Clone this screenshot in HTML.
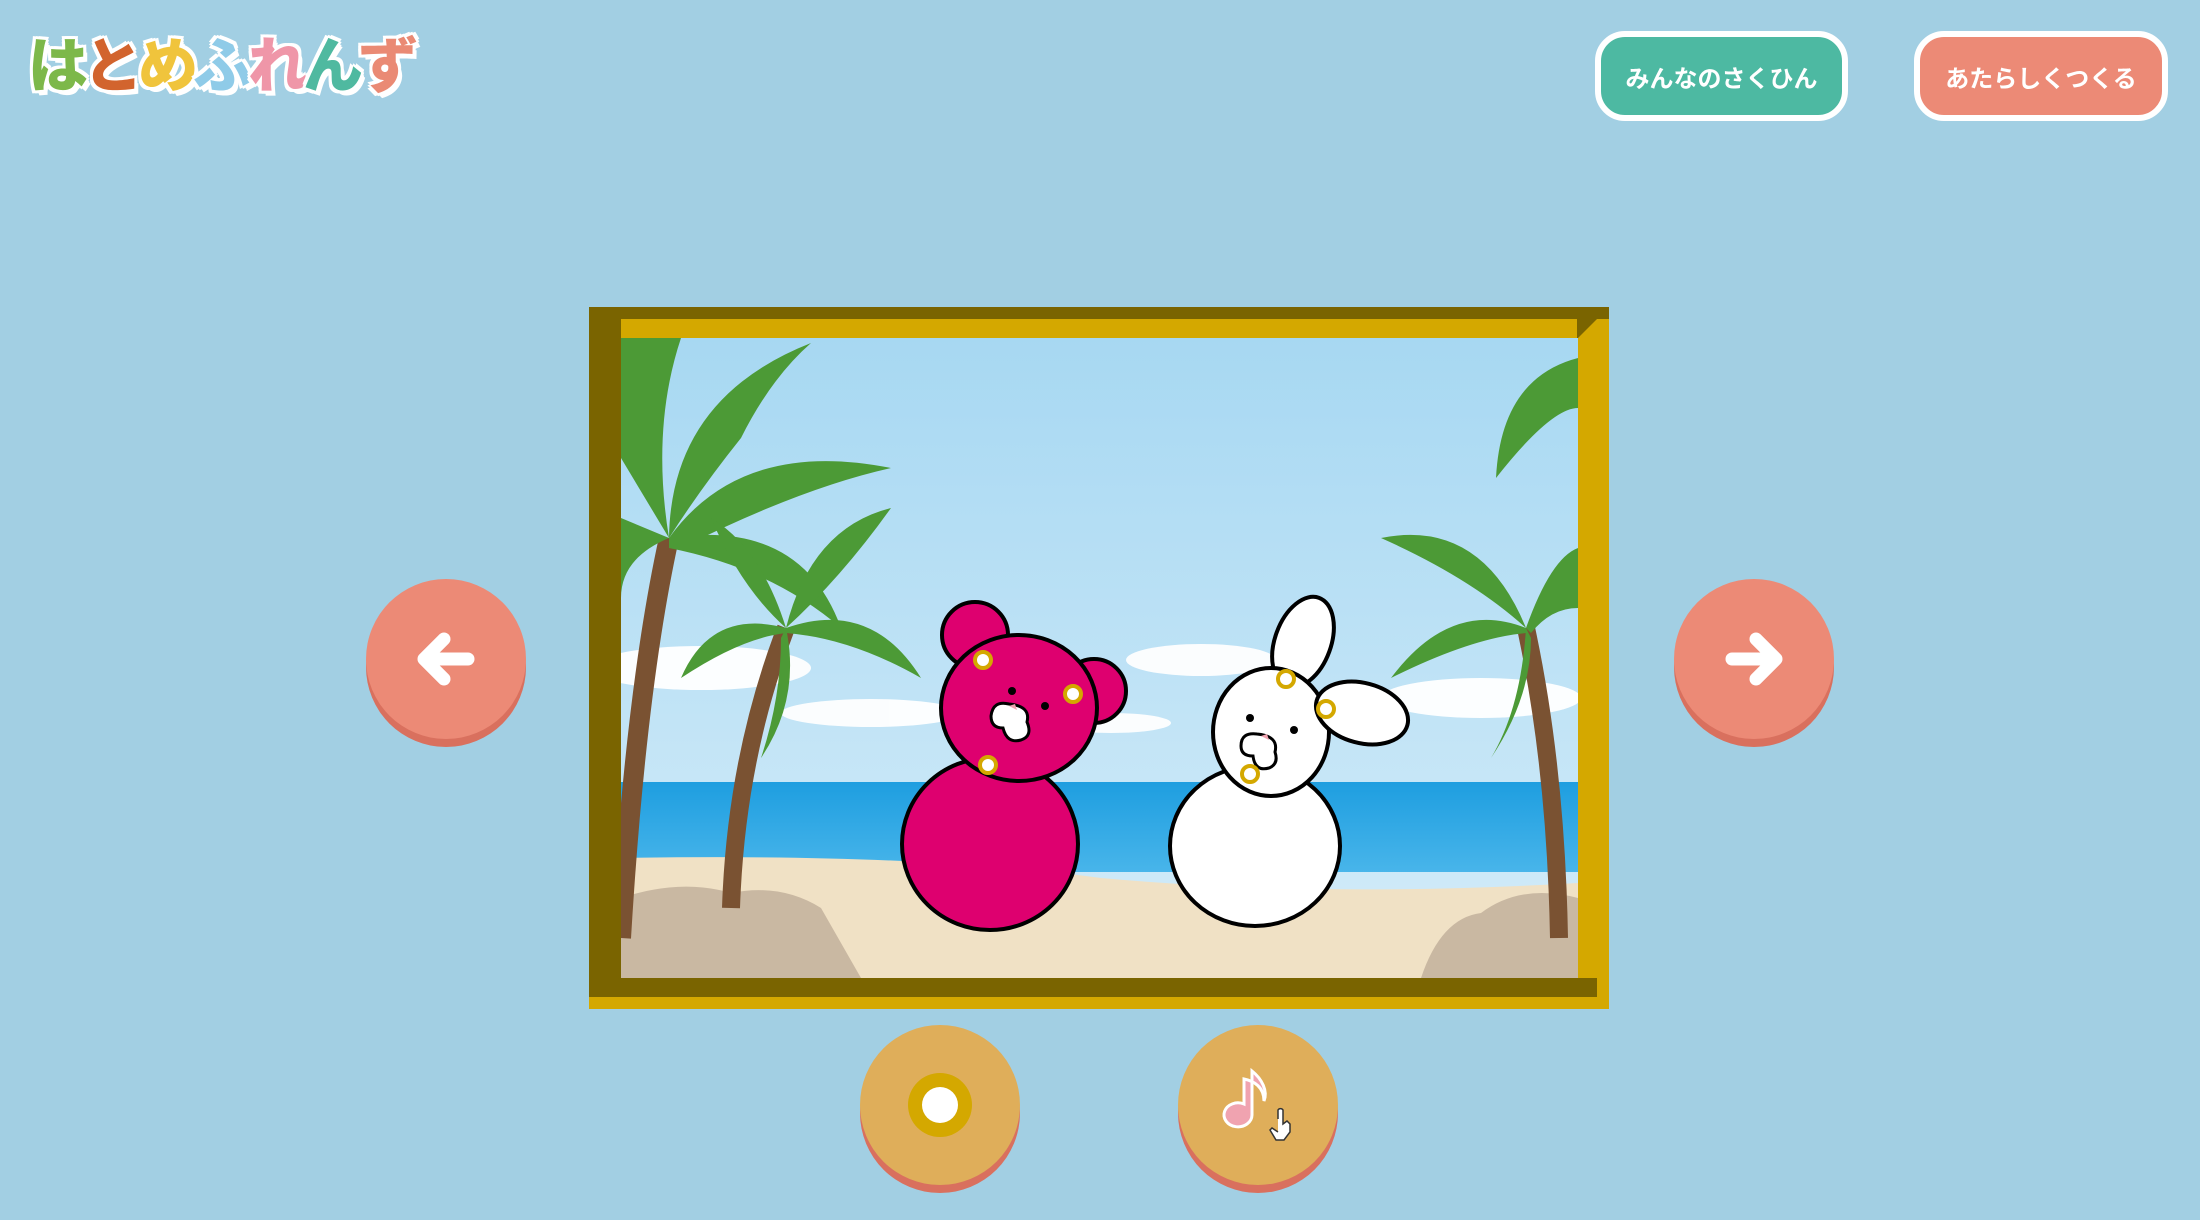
<!DOCTYPE html>
<html><head><meta charset="utf-8"><style>
html,body{margin:0;padding:0}
body{width:2200px;height:1220px;background:#a2cfe3;position:relative;overflow:hidden;font-family:"Liberation Sans","Noto Sans CJK JP",sans-serif}
.logo{position:absolute;left:28px;top:32px;font-size:60px;font-weight:900;letter-spacing:-5px;line-height:1;font-family:"Noto Sans CJK JP",sans-serif}
.logo span{text-shadow:3px 0 #fff,-3px 0 #fff,0 3px #fff,0 -3px #fff,3px 3px #fff,-3px 3px #fff,3px -3px #fff,-3px -3px #fff,4px 5px #fff}
.tb{position:absolute;top:31px;height:90px;box-sizing:border-box;border:6px solid #fff;border-radius:30px;color:#fff;font-size:24px;font-weight:bold;display:flex;align-items:center;justify-content:center;font-family:"Noto Sans CJK JP",sans-serif}
.circ{position:absolute;width:160px;height:160px;border-radius:50%}
</style></head><body>
<div class="logo"><span style="color:#7db84a">は</span><span style="color:#d2642e">と</span><span style="color:#f0c43c">め</span><span style="color:#8fcbe8">ふ</span><span style="color:#ef96a8">れ</span><span style="color:#4fb9a0">ん</span><span style="color:#ea8a74">ず</span></div>
<div class="tb" style="left:1595px;width:253px;background:#4db9a2">みんなのさくひん</div>
<div class="tb" style="left:1914px;width:254px;background:#ec8a76">あたらしくつくる</div>

<div class="circ" style="left:366px;top:587px;background:#d9705e"></div>
<div class="circ" style="left:366px;top:579px;background:#ec8a76"></div>
<svg style="position:absolute;left:406px;top:619px" width="80" height="80" viewBox="0 0 80 80"><path d="M62 40H20M38 20L18 40l20 20" stroke="#fff" stroke-width="13" fill="none" stroke-linecap="round" stroke-linejoin="round"/></svg>
<div class="circ" style="left:1674px;top:587px;background:#d9705e"></div>
<div class="circ" style="left:1674px;top:579px;background:#ec8a76"></div>
<svg style="position:absolute;left:1714px;top:619px" width="80" height="80" viewBox="0 0 80 80"><path d="M18 40h42M42 20l20 20-20 20" stroke="#fff" stroke-width="13" fill="none" stroke-linecap="round" stroke-linejoin="round"/></svg>

<div class="circ" style="left:860px;top:1033px;background:#d9705e"></div>
<div class="circ" style="left:860px;top:1025px;background:#dfae5a"></div>
<div style="position:absolute;left:908px;top:1073px;width:64px;height:64px;border-radius:50%;background:#d4a800"></div>
<div style="position:absolute;left:922px;top:1087px;width:36px;height:36px;border-radius:50%;background:#fff"></div>
<div class="circ" style="left:1178px;top:1033px;background:#d9705e"></div>
<div class="circ" style="left:1178px;top:1025px;background:#dfae5a"></div>
<svg style="position:absolute;left:1218px;top:1065px" width="80" height="80" viewBox="0 0 80 80"><path d="M34 6v44a14 12 0 1 1-8-11V14c10 2 20 8 20 22 4-10-2-22-12-30z" fill="#f0a3b0" stroke="#fff" stroke-width="3"/><path d="M60 54v-9a3 3 0 0 1 5 0v14l4-3 3 3v8l-6 8h-8l-6-10 2-2 6 4" fill="#fff" stroke="#333" stroke-width="1.5"/></svg>

<svg style="position:absolute;left:589px;top:307px" width="1020" height="702" viewBox="0 0 1020 702">
<rect width="1020" height="702" fill="#d4a800"/>
<rect x="0" y="0" width="1020" height="12" fill="#7a6400"/>
<rect x="0" y="0" width="32" height="690" fill="#7a6400"/>
<rect x="12" y="671" width="996" height="19" fill="#7a6400"/>
<polygon points="988,12 1008,12 988,32" fill="#7a6400"/>
<polygon points="0,690 12,690 0,702" fill="#d4a800"/>
</svg>
<svg style="position:absolute;left:621px;top:338px" width="957" height="640" viewBox="0 0 957 640">
<defs><linearGradient id="sky" x1="0" y1="0" x2="0" y2="1"><stop offset="0" stop-color="#a7d8f2"/><stop offset="1" stop-color="#d4ecf9"/></linearGradient>
<linearGradient id="sea" x1="0" y1="0" x2="0" y2="1"><stop offset="0" stop-color="#1e9ee0"/><stop offset="1" stop-color="#48b5ea"/></linearGradient></defs>
<rect width="957" height="640" fill="url(#sky)"/>
<g fill="#fff" opacity=".95">
<ellipse cx="80" cy="330" rx="110" ry="22"/><ellipse cx="250" cy="375" rx="90" ry="14"/><ellipse cx="580" cy="322" rx="75" ry="16"/><ellipse cx="860" cy="360" rx="100" ry="20"/><ellipse cx="490" cy="385" rx="60" ry="10"/></g>
<rect y="444" width="957" height="90" fill="url(#sea)"/>
<path d="M0 520 Q300 515 480 540 Q700 560 957 545 V640 H0Z" fill="#f0e1c5"/>
<path d="M0 560 Q60 540 110 555 Q160 545 200 570 L240 640 H0Z" fill="#c9b8a2"/>
<path d="M957 560 Q900 545 860 575 Q820 580 800 640 H957Z" fill="#c9b8a2"/>
<path d="M0 600 Q15 350 48 200" stroke="#7a5232" stroke-width="20" fill="none"/>
<path d="M110 570 Q115 420 165 290" stroke="#7a5232" stroke-width="18" fill="none"/>
<path d="M938 600 Q935 430 905 290" stroke="#7a5232" stroke-width="18" fill="none"/>
<g fill="#4c9a36">
<path d="M48 200 Q50 60 190 5 Q150 40 120 100 Q80 150 48 200Z"/>
<path d="M48 200 Q30 90 60 0 H0 V120Z"/>
<path d="M48 200 Q120 100 270 130 Q180 150 60 210Z"/>
<path d="M48 200 Q180 180 220 290 Q150 230 48 210Z"/>
<path d="M48 200 Q0 220 0 260 V180Z"/>
<path d="M165 290 Q140 210 90 180 Q120 250 165 290Z"/>
<path d="M165 290 Q190 190 270 170 Q220 240 165 290Z"/>
<path d="M165 290 Q250 260 300 340 Q230 300 165 295Z"/>
<path d="M165 290 Q90 270 60 340 Q120 300 165 295Z"/>
<path d="M165 290 Q180 360 140 420 Q160 360 160 300Z"/>
<path d="M905 290 Q860 180 760 200 Q850 240 905 290Z"/>
<path d="M905 290 Q830 260 770 340 Q850 300 905 295Z"/>
<path d="M905 290 Q930 220 957 210 V270 Q930 270 910 295Z"/>
<path d="M957 20 Q880 40 875 140 Q930 70 957 70Z"/>
<path d="M905 290 Q900 370 870 420 Q910 360 910 300Z"/>
</g>
<g stroke="#000" stroke-width="4">
<ellipse cx="369" cy="506" rx="88" ry="86" fill="#de006f"/>
<circle cx="354" cy="297" r="33" fill="#de006f"/>
<circle cx="473" cy="353" r="32" fill="#de006f"/>
<ellipse cx="398" cy="370" rx="78" ry="73" fill="#de006f"/>
<path d="M388 366 q-16 -4 -18 12 q0 12 12 12 q4 16 18 12 q12 -4 6 -18 q4 -16 -18 -18z" fill="#fff" stroke-width="3"/>
</g>
<circle cx="391" cy="353" r="4"/><circle cx="424" cy="368" r="4"/>
<path d="M388 368 l6 -2 l2 6z" fill="#f0a3b0"/>
<g stroke="#000" stroke-width="4" fill="#fff">
<ellipse cx="634" cy="508" rx="85" ry="80"/>
<ellipse cx="682" cy="304" rx="28" ry="47" transform="rotate(20 682 304)"/>
<ellipse cx="650" cy="394" rx="58" ry="64"/>
<ellipse cx="741" cy="375" rx="47" ry="30" transform="rotate(15 741 375)"/>
<path d="M636 396 q-16 -2 -16 12 q0 10 12 10 q2 16 16 12 q10 -4 6 -16 q4 -16 -18 -18z" stroke-width="3"/>
</g>
<circle cx="629" cy="380" r="4"/><circle cx="673" cy="392" r="4"/>
<path d="M640 398 l6 -2 l2 6z" fill="#f0a3b0"/>
<g fill="#fff" stroke="#d4a800" stroke-width="4">
<circle cx="362" cy="322" r="8"/>
<circle cx="452" cy="356" r="8"/>
<circle cx="367" cy="427" r="8"/>
<circle cx="665" cy="341" r="8"/>
<circle cx="705" cy="371" r="8"/>
<circle cx="629" cy="436" r="8"/>
</g>
</svg>
</body></html>
